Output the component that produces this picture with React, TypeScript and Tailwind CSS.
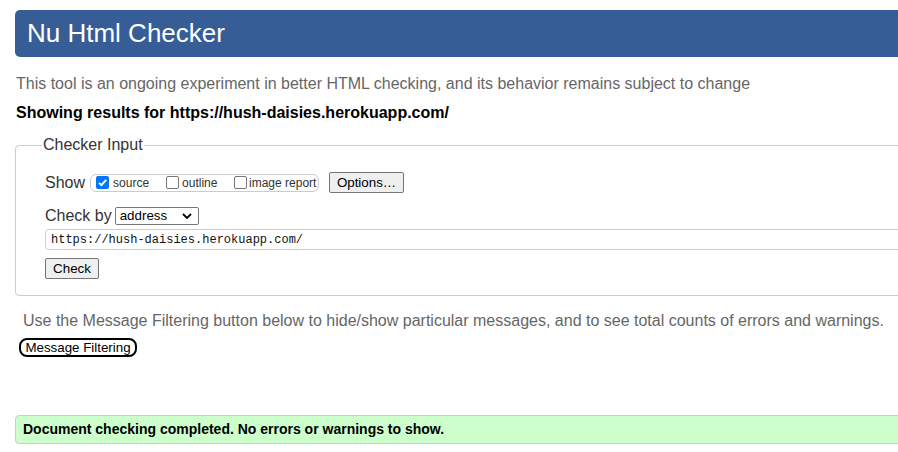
const Checkbox = ({ checked }: { checked?: boolean }) =>
  checked ? (
    <span className="flex w-[13px] h-[13px] shrink-0 items-center justify-center rounded-[2px] bg-[#0075ff]">
      <svg viewBox="0 0 13 13" className="w-[13px] h-[13px]">
        <path d="M3 6.8 L5.4 9.2 L10.2 3.8" fill="none" stroke="#fff" strokeWidth="1.9" />
      </svg>
    </span>
  ) : (
    <span className="block w-[13px] h-[13px] shrink-0 rounded-[2px] border border-[#767676] bg-white" />
  );

const App = () => {
  return (
    <div className="w-[898px] h-[452px] overflow-hidden bg-white font-['Liberation_Sans',Arial,sans-serif] text-[#222]">
      <div className="w-[1000px] pl-[15px] pt-[10px]">
        <header className="flex h-[47px] items-center rounded-[5px] bg-[#365d96] pl-[12px] text-[26px] text-white">
          Nu Html Checker
        </header>

        <p className="mt-[18px] pl-[1px] text-[16px] leading-[18px] text-[#666]">
          This tool is an ongoing experiment in better HTML checking, and its behavior remains subject to change
        </p>
        <p className="mt-[11px] pl-[1px] text-[16px] font-bold leading-[18px] text-black">
          Showing results for https://hush-daisies.herokuapp.com/
        </p>

        <fieldset className="mt-[14px] rounded-[4px] border border-[#ccc] pl-[29px] pb-[16px]">
          <legend className="-ml-[3px] px-[1px] text-[16px] leading-[18px] text-[#333]">Checker Input</legend>

          <div className="mt-[18px] flex h-[21px] items-center">
            <span className="text-[16px] leading-[18px] text-[#333]">Show</span>
            <div className="ml-[5px] flex h-[18px] w-[229px] items-center rounded-[6px] border border-[#ccc] pl-[5px] text-[12px] text-[#333]">
              <label className="flex w-[70px] items-center gap-[4px]">
                <Checkbox checked />
                <span>source</span>
              </label>
              <label className="flex w-[68px] items-center gap-[3px]">
                <Checkbox />
                <span>outline</span>
              </label>
              <label className="flex items-center gap-[2px]">
                <Checkbox />
                <span>image report</span>
              </label>
            </div>
            <button className="ml-[10px] h-[21px] w-[75px] rounded-[2px] border border-[#767676] bg-[#efefef] text-[13.33px] text-black">
              Options…
            </button>
          </div>

          <div className="mt-[14px] flex items-center">
            <span className="text-[16px] leading-[18px] text-[#333]">Check by</span>
            <div className="ml-[3px] flex h-[18px] w-[84px] items-center justify-between rounded-[2px] border border-[#767676] bg-white pl-[4px] pr-[6px] text-[13.33px] text-black">
              <span>address</span>
              <svg viewBox="0 0 10 6" className="w-[10px] h-[6px]">
                <path d="M1 1 L5 5 L9 1" fill="none" stroke="#000" strokeWidth="1.8" />
              </svg>
            </div>
          </div>

          <div className="mt-[4px] flex h-[21px] items-center rounded-[4px] border border-[#ccc] pl-[5px] font-['Liberation_Mono','DejaVu_Sans_Mono',monospace] text-[12px] text-[#111]">
            https://hush-daisies.herokuapp.com/
          </div>

          <button className="mt-[8px] block h-[21px] w-[54px] rounded-[2px] border border-[#767676] bg-[#efefef] text-[13.33px] text-black">
            Check
          </button>
        </fieldset>

        <p className="mt-[16px] pl-[8px] text-[16px] leading-[18px] text-[#666]">
          Use the Message Filtering button below to hide/show particular messages, and to see total counts of errors and warnings.
        </p>
        <button className="ml-[4px] mt-[8px] block h-[19px] w-[118px] rounded-[8px] border-2 border-black bg-white text-[13.33px] leading-[15px] text-black">
          Message Filtering
        </button>

        <div className="mt-[58px] flex h-[29px] items-center rounded-l-[4px] border border-[#ccc] bg-[#ccffcc] pl-[7px] text-[14px] font-bold text-black">
          Document checking completed. No errors or warnings to show.
        </div>
      </div>
    </div>
  );
};

export default App;
